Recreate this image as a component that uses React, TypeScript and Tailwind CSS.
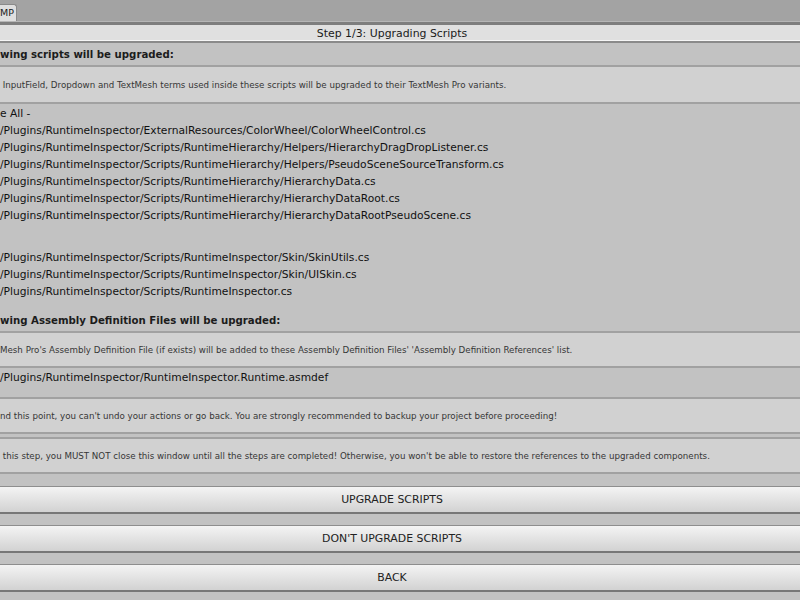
import React from 'react';

// hidden part of a line: sits left of the window edge, only the rest shows
function Clip({ pre }: { pre: string }) {
  return (
    <span className="inline-flex w-0 justify-end whitespace-pre">
      <span className="shrink-0">{pre}</span>
    </span>
  );
}

function Header({ pre, text }: { pre: string; text: string }) {
  return (
    <div className="h-[22px] whitespace-nowrap pt-px text-[10.2px] font-bold leading-[22px] text-[#1c1c1c]">
      <Clip pre={pre} />
      {text}
    </div>
  );
}

function Note({ pre, text, h = 'h-[39px]' }: { pre: string; text: string; h?: string }) {
  return (
    <div
      className={`flex ${h} items-center whitespace-nowrap border-y-2 border-[#a1a1a1] bg-[#d1d1d1] pt-[2px] text-[8.7px] text-[#363636]`}
    >
      <span>
        <Clip pre={pre} />
        {text}
      </span>
    </div>
  );
}

function Row({ pre, text }: { pre: string; text: string }) {
  return (
    <div className="h-[17px] whitespace-nowrap pt-px text-[10.7px] leading-[17px] text-[#111]">
      <Clip pre={pre} />
      {text}
    </div>
  );
}

function Btn({ label }: { label: string }) {
  return (
    <div className="flex h-[28px] items-center justify-center border-t border-b-2 border-t-[#8e8e8e] border-b-[#777] bg-linear-to-b from-[#f4f4f4] to-[#d2d2d2] pt-px pr-[16px] text-[10.9px] text-[#222]">
      {label}
    </div>
  );
}

const scripts = [
  'ExternalResources/ColorWheel/ColorWheelControl.cs',
  'Scripts/RuntimeHierarchy/Helpers/HierarchyDragDropListener.cs',
  'Scripts/RuntimeHierarchy/Helpers/PseudoSceneSourceTransform.cs',
  'Scripts/RuntimeHierarchy/HierarchyData.cs',
  'Scripts/RuntimeHierarchy/HierarchyDataRoot.cs',
  'Scripts/RuntimeHierarchy/HierarchyDataRootPseudoScene.cs',
];

const skinScripts = [
  'Scripts/RuntimeInspector/Skin/SkinUtils.cs',
  'Scripts/RuntimeInspector/Skin/UISkin.cs',
  'Scripts/RuntimeInspector.cs',
];

export default function App() {
  return (
    <div className="h-[600px] w-[800px] overflow-hidden bg-[#c2c2c2] font-['DejaVu_Sans',sans-serif]">
      {/* window tab strip */}
      <div className="flex h-[21px] items-end bg-[#a3a3a3]">
        <div className="h-[17px] w-[17px] overflow-hidden whitespace-nowrap rounded-tr-[3px] border-t border-r border-[#8a8a8a] bg-[#dfdfdf] text-[9.5px] leading-[16px] text-[#222]">
          <Clip pre="T" />
          MP
        </div>
      </div>
      <div className="h-px bg-[#b6b6b6]" />
      <div className="h-[3px] bg-[#7e7e7e]" />

      {/* step title */}
      <div className="h-[15px] bg-[#e0e0e0] pt-px pr-[16px] text-center text-[10.9px] leading-[15px] text-[#1a1a1a]">
        Step 1/3: Upgrading Scripts
      </div>
      <div className="h-px bg-[#f6f6f6]" />
      <div className="h-[2px] bg-[#8a8a8a]" />

      <Header pre="The follo" text="wing scripts will be upgraded:" />
      <Note
        pre="Text,"
        text=" InputField, Dropdown and TextMesh terms used inside these scripts will be upgraded to their TextMesh Pro variants."
      />

      <Row pre="- Toggl" text="e All -" />
      {scripts.map((s) => (
        <Row key={s} pre="Assets" text={`/Plugins/RuntimeInspector/${s}`} />
      ))}
      <div className="h-[25px]" />
      {skinScripts.map((s) => (
        <Row key={s} pre="Assets" text={`/Plugins/RuntimeInspector/${s}`} />
      ))}

      <div className="h-[10px]" />
      <Header pre="The follo" text="wing Assembly Definition Files will be upgraded:" />
      <Note
        h="h-[37px]"
        pre="Text"
        text="Mesh Pro's Assembly Definition File (if exists) will be added to these Assembly Definition Files' 'Assembly Definition References' list."
      />
      <Row pre="Assets" text="/Plugins/RuntimeInspector/RuntimeInspector.Runtime.asmdef" />

      <div className="h-[12px]" />
      <Note
        h="h-[37px]"
        pre="Beyo"
        text="nd this point, you can't undo your actions or go back. You are strongly recommended to backup your project before proceeding!"
      />
      <div className="h-[3px]" />
      <Note
        h="h-[37px]"
        pre="During"
        text=" this step, you MUST NOT close this window until all the steps are completed! Otherwise, you won't be able to restore the references to the upgraded components."
      />

      <div className="flex flex-col gap-[11px] pt-[12px]">
        <Btn label="UPGRADE SCRIPTS" />
        <Btn label="DON'T UPGRADE SCRIPTS" />
        <Btn label="BACK" />
      </div>
    </div>
  );
}
